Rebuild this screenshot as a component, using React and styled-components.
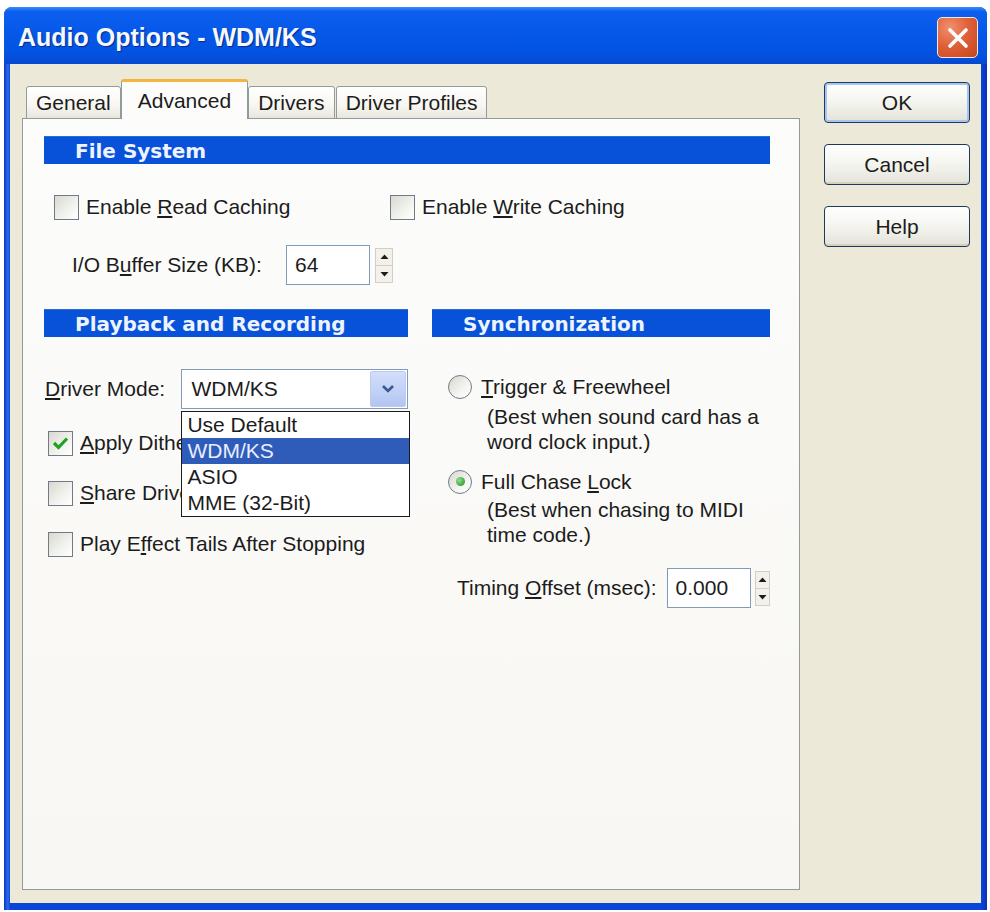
import React from "react";
import styled, { createGlobalStyle } from "styled-components";

const GlobalStyle = createGlobalStyle`
  html, body {
    margin: 0;
    padding: 0;
    background: #ffffff;
  }
  body {
    font-family: "Liberation Sans", Arial, sans-serif;
    color: #1c1c1c;
  }
  * {
    box-sizing: border-box;
  }
`;

const Window = styled.div`
  margin: 7px 0 0 4px;
  width: 983px;
  height: 903px;
  display: flex;
  flex-direction: column;
  background: linear-gradient(90deg, #0a37c4 0, #2a6cf0 4px, #0c46d6 6px, #0c46d6 calc(100% - 6px), #0a31b8 100%);
  border-radius: 8px 8px 0 0;
  overflow: hidden;
`;

const TitleBar = styled.div`
  height: 57px;
  flex-shrink: 0;
  display: flex;
  align-items: center;
  justify-content: space-between;
  padding: 4px 9px 0 14px;
  background: linear-gradient(
    180deg,
    #3b8dfb 0,
    #0c5fee 8%,
    #0558e9 45%,
    #0453e2 80%,
    #0648cf 100%
  );
`;

const Title = styled.span`
  font-family: "Liberation Sans", Arial, sans-serif;
  font-weight: bold;
  font-size: 25px;
  color: #f4f8ff;
  text-shadow: 1px 1px 1px #0a2a8a;
`;

const CloseButton = styled.div`
  width: 41px;
  height: 41px;
  display: flex;
  align-items: center;
  justify-content: center;
  border: 1px solid #f3e7e1;
  border-radius: 5px;
  background: radial-gradient(circle at 30% 25%, #f09070 0, #e0623a 45%, #c5441c 100%);
`;

const Body = styled.div`
  flex: 1;
  margin: 0 6px 7px;
  display: flex;
  padding: 15px 11px 13px 12px;
  background: #ece9d8;
`;

const TabArea = styled.div`
  flex: 1;
  display: flex;
  flex-direction: column;
`;

const TabStrip = styled.div`
  display: flex;
  align-items: flex-end;
  gap: 1px;
  padding-left: 4px;
  height: 40px;
  margin-bottom: -1px;
  position: relative;
  z-index: 1;
`;

const Tab = styled.div`
  height: ${(p) => (p.$active ? "40px" : "33px")};
  display: flex;
  align-items: center;
  padding: ${(p) => (p.$active ? "0 16px" : "0 9px")};
  font-size: 21px;
  color: #1c1c1c;
  border: 1px solid #919b9c;
  border-bottom: ${(p) => (p.$active ? "none" : "1px solid #919b9c")};
  border-top: ${(p) => (p.$active ? "3px solid #f3b440" : "1px solid #919b9c")};
  border-radius: 3px 3px 0 0;
  background: ${(p) =>
    p.$active
      ? "#fcfcfb"
      : "linear-gradient(180deg, #ffffff 0, #f7f6f1 60%, #e9e7dc 100%)"};
  margin: ${(p) => (p.$active ? "0 -1px" : "0")};
`;

const Panel = styled.div`
  flex: 1;
  border: 1px solid #919b9c;
  background: linear-gradient(180deg, #fcfcfb 0, #f8f7f3 100%);
  padding: 17px 29px 0 21px;
  display: flex;
  flex-direction: column;
`;

const SectionBar = styled.div`
  height: 28px;
  display: flex;
  align-items: center;
  padding-left: 31px;
  background: #0752d8;
  border-top: 1px solid #2a6ae0;
  color: #eef4ff;
  font-family: "DejaVu Sans", Verdana, sans-serif;
  font-weight: bold;
  font-size: 20px;
`;

const CheckGrid = styled.div`
  margin-top: 30px;
  display: grid;
  grid-template-columns: 336px 1fr;
  padding-left: 10px;
`;

const CheckRow = styled.label`
  display: flex;
  align-items: center;
  gap: 7px;
  height: 26px;
  font-size: 21px;
  white-space: nowrap;
  margin-top: ${(p) => p.$mt || 0}px;
  padding-left: ${(p) => p.$pl || 0}px;
`;

/* label text; $clip cuts it where an open list covers it */
const CheckText = styled.span`
  overflow: hidden;
  max-width: ${(p) => (p.$clip ? `${p.$clip}px` : "none")};
`;

const Box = styled.span`
  width: 25px;
  height: 25px;
  flex-shrink: 0;
  display: flex;
  align-items: center;
  justify-content: center;
  border: 1px solid #6f7c88;
  background: linear-gradient(135deg, #d9d8d0 0, #f1f1ec 55%, #ffffff 100%);
`;

const U = styled.span`
  text-decoration: underline;
  text-underline-offset: 2px;
`;

const FieldRow = styled.div`
  display: flex;
  align-items: center;
  height: 40px;
  margin-top: ${(p) => p.$mt || 0}px;
  padding-left: ${(p) => p.$pl || 0}px;
`;

const FieldLabel = styled.span`
  font-size: 21px;
  white-space: nowrap;
  width: ${(p) => (p.$w ? `${p.$w}px` : "auto")};
  margin-right: ${(p) => p.$mr || 0}px;
`;

const TextInput = styled.div`
  width: ${(p) => p.$w}px;
  height: 40px;
  border: 1px solid #7f9db9;
  background: #ffffff;
  display: flex;
  align-items: center;
  padding-left: 8px;
  font-size: 21px;
`;

const Spin = styled.div`
  width: 18px;
  height: 35px;
  margin-left: ${(p) => p.$ml}px;
  display: flex;
  flex-direction: column;
  border: 1px solid #d2d0c6;
  background: #f3f1e9;
`;

const SpinHalf = styled.div`
  flex: 1;
  display: flex;
  align-items: center;
  justify-content: center;
  & + & {
    border-top: 1px solid #d2d0c6;
  }
`;

const Columns = styled.div`
  margin-top: 24px;
  display: grid;
  grid-template-columns: 364px 338px;
  column-gap: 24px;
`;

const Column = styled.div`
  display: flex;
  flex-direction: column;
`;

const Combo = styled.div`
  position: relative;
  width: 229px;
  height: 40px;
  border: 1px solid #7f9db9;
  background: #ffffff;
  display: flex;
  align-items: center;
  justify-content: space-between;
  padding: 0 1px 0 9px;
  font-size: 21px;
`;

const ComboButton = styled.div`
  width: 36px;
  height: 36px;
  display: flex;
  align-items: center;
  justify-content: center;
  border-radius: 2px;
  background: linear-gradient(180deg, #d3defa 0, #c0d0f6 60%, #b3c5f0 100%);
  border: 1px solid #bccbee;
`;

const DropList = styled.ul`
  position: absolute;
  top: 41px;
  left: -1px;
  width: 229px;
  margin: 0;
  padding: 0;
  list-style: none;
  border: 1px solid #1a1a1a;
  background: #ffffff;
  z-index: 5;
`;

const DropItem = styled.li`
  height: 26px;
  line-height: 26px;
  padding-left: 5px;
  font-size: 21px;
  background: ${(p) => (p.$selected ? "#2f5cb8" : "transparent")};
  color: ${(p) => (p.$selected ? "#e8eeff" : "#1c1c1c")};
`;

const RadioOption = styled.div`
  margin-top: ${(p) => p.$mt}px;
`;

const RadioRow = styled.div`
  display: flex;
  align-items: center;
  gap: 9px;
  height: 25px;
  padding-left: 16px;
  font-size: 21px;
`;

const Radio = styled.span`
  width: 24px;
  height: 24px;
  border-radius: 50%;
  flex-shrink: 0;
  border: 1px solid #6f7c88;
  background: linear-gradient(135deg, #d6d5cd 0, #f3f3ee 55%, #ffffff 100%);
  display: flex;
  align-items: center;
  justify-content: center;
  &::after {
    content: "";
    display: ${(p) => (p.$checked ? "block" : "none")};
    width: 9px;
    height: 9px;
    border-radius: 50%;
    background: radial-gradient(circle at 35% 35%, #8fdc8f 0, #3ea73e 70%);
  }
`;

const Desc = styled.div`
  margin-top: ${(p) => p.$mt}px;
  padding-left: 55px;
  font-size: 21px;
  line-height: 25px;
`;

const ButtonColumn = styled.div`
  width: 146px;
  margin-left: 24px;
  padding-top: 3px;
  display: flex;
  flex-direction: column;
  gap: 21px;
`;

const DialogButton = styled.div`
  height: 41px;
  display: flex;
  align-items: center;
  justify-content: center;
  font-size: 21px;
  color: #1c1c1c;
  border: 1px solid #1d3a5e;
  border-radius: 4px;
  background: linear-gradient(180deg, #ffffff 0, #f4f4ef 50%, #e4e2d8 100%);
  box-shadow: ${(p) =>
    p.$default ? "inset 0 0 0 2px #a8c4f0" : "inset 0 -2px 0 #d6d0c0"};
`;

function CheckMark() {
  return (
    <svg width="17" height="15" viewBox="0 0 17 15">
      <polyline
        points="2,7 6.5,11.5 15,2.5"
        fill="none"
        stroke="#21a121"
        strokeWidth="3.2"
      />
    </svg>
  );
}

function Check({ checked, children, mt, pl, clip }) {
  return (
    <CheckRow $mt={mt} $pl={pl}>
      <Box>{checked && <CheckMark />}</Box>
      <CheckText $clip={clip}>{children}</CheckText>
    </CheckRow>
  );
}

function Spinner({ ml }) {
  return (
    <Spin $ml={ml}>
      <SpinHalf>
        <svg width="9" height="6" viewBox="0 0 9 6">
          <path d="M4.5 0.5 L8.5 5 L0.5 5 Z" fill="#1c1c1c" />
        </svg>
      </SpinHalf>
      <SpinHalf>
        <svg width="9" height="6" viewBox="0 0 9 6">
          <path d="M0.5 1 L8.5 1 L4.5 5.5 Z" fill="#1c1c1c" />
        </svg>
      </SpinHalf>
    </Spin>
  );
}

const driverModes = ["Use Default", "WDM/KS", "ASIO", "MME (32-Bit)"];

export default function App() {
  return (
    <>
      <GlobalStyle />
      <Window>
        <TitleBar>
          <Title>Audio Options - WDM/KS</Title>
          <CloseButton>
            <svg width="24" height="24" viewBox="0 0 24 24">
              <path
                d="M4 4 L20 20 M20 4 L4 20"
                stroke="#ffffff"
                strokeWidth="3.6"
                strokeLinecap="round"
              />
            </svg>
          </CloseButton>
        </TitleBar>
        <Body>
          <TabArea>
            <TabStrip>
              <Tab>General</Tab>
              <Tab $active>Advanced</Tab>
              <Tab>Drivers</Tab>
              <Tab>Driver Profiles</Tab>
            </TabStrip>
            <Panel>
              <SectionBar>File System</SectionBar>
              <CheckGrid>
                <Check>
                  Enable <U>R</U>ead Caching
                </Check>
                <Check>
                  Enable <U>W</U>rite Caching
                </Check>
              </CheckGrid>
              <FieldRow $mt={25} $pl={28}>
                <FieldLabel $w={214}>
                  I/O B<U>u</U>ffer Size (KB):
                </FieldLabel>
                <TextInput $w={84}>64</TextInput>
                <Spinner ml={5} />
              </FieldRow>
              <Columns>
                <Column>
                  <SectionBar>Playback and Recording</SectionBar>
                  <FieldRow $mt={32} $pl={1}>
                    <FieldLabel $w={138}>
                      <U>D</U>river Mode:
                    </FieldLabel>
                    <Combo>
                      <span>WDM/KS</span>
                      <ComboButton>
                        <svg width="14" height="10" viewBox="0 0 14 10">
                          <polyline
                            points="2,2 7,7 12,2"
                            fill="none"
                            stroke="#3b5892"
                            strokeWidth="2.6"
                          />
                        </svg>
                      </ComboButton>
                      <DropList>
                        {driverModes.map((m) => (
                          <DropItem key={m} $selected={m === "WDM/KS"}>
                            {m}
                          </DropItem>
                        ))}
                      </DropList>
                    </Combo>
                  </FieldRow>
                  <Check checked mt={21} pl={4} clip={102}>
                    <U>A</U>pply Dither
                  </Check>
                  <Check mt={24} pl={4} clip={102}>
                    <U>S</U>hare Drivers
                  </Check>
                  <Check mt={25} pl={4}>
                    Play E<U>f</U>fect Tails After Stopping
                  </Check>
                </Column>
                <Column>
                  <SectionBar>Synchronization</SectionBar>
                  <RadioOption $mt={37}>
                    <RadioRow>
                      <Radio />
                      <span>
                        <U>T</U>rigger &amp; Freewheel
                      </span>
                    </RadioRow>
                    <Desc $mt={5}>
                      (Best when sound card has a
                      <br />
                      word clock input.)
                    </Desc>
                  </RadioOption>
                  <RadioOption $mt={15}>
                    <RadioRow>
                      <Radio $checked />
                      <span>
                        Full Chase <U>L</U>ock
                      </span>
                    </RadioRow>
                    <Desc $mt={3}>
                      (Best when chasing to MIDI
                      <br />
                      time code.)
                    </Desc>
                  </RadioOption>
                  <FieldRow $mt={21} $pl={25}>
                    <FieldLabel $mr={10}>
                      Timing <U>O</U>ffset (msec):
                    </FieldLabel>
                    <TextInput $w={99}>0.000</TextInput>
                    <Spinner ml={4} />
                  </FieldRow>
                </Column>
              </Columns>
            </Panel>
          </TabArea>
          <ButtonColumn>
            <DialogButton $default>OK</DialogButton>
            <DialogButton>Cancel</DialogButton>
            <DialogButton>Help</DialogButton>
          </ButtonColumn>
        </Body>
      </Window>
    </>
  );
}
